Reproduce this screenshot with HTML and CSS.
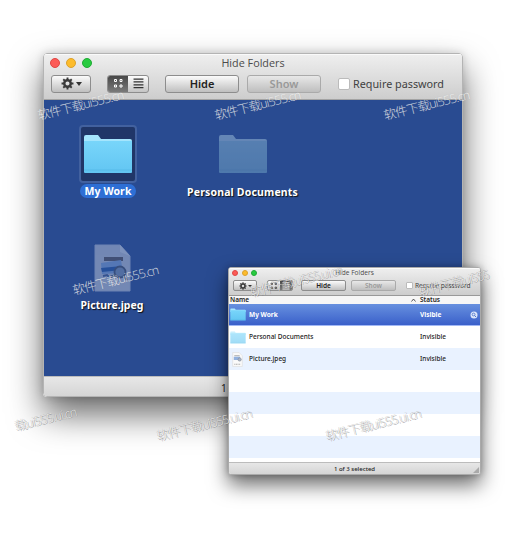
FILE: index.html
```html
<!DOCTYPE html>
<html lang="en"><head><meta charset="utf-8"><title>Hide Folders</title><link rel="stylesheet" href="styles.css"></head>
<body>
<svg class="defs" width="0" height="0" aria-hidden="true">
<defs>
<linearGradient id="sky" x2="0" y2="1"><stop stop-color="#78d5fa"/><stop offset="1" stop-color="#62c5f2"/></linearGradient>
<symbol id="folder" viewBox="0 0 50 40"><path d="M1 5V3q0-2 2-2h12l3 4h29q2 0 2 2v5H1z" fill="#a4e5fd"/><path d="M1 7h48v31q0 1-1 1H2q-1 0-1-1z" fill="url(#sky)"/><path d="M1 36h48" stroke="#54b8e4" stroke-width=".8"/></symbol>
<symbol id="gear" viewBox="0 0 24 24"><circle cx="12" cy="12" r="6" fill="none" stroke="#3a3a3a" stroke-width="4.500"/><path d="M12 1v5M12 18v5M1 12h5M18 12h5M4.200 4.200l4 4M15.800 15.800l4 4M4.200 19.800l4-4M15.800 8.200l4-4" stroke="#3a3a3a" stroke-width="3.500"/></symbol>
<symbol id="grid" viewBox="0 0 11 11"><path d="M1.500 1.500h2v2h-2zM7 1.500h2v2h-2zM1.500 7h2v2h-2zM7 7h2v2h-2z" fill="none" stroke="currentColor"/></symbol>
<symbol id="list" viewBox="0 0 10 10"><path d="M.5 1h9M.5 3.600h9M.5 6.200h9M.5 8.800h9" stroke="currentColor" stroke-width="1.1"/></symbol>
<symbol id="picture" viewBox="0 0 37 48"><path d="M1 1h25l10 11v35H1z" fill="#d9dce4" stroke="#ccd2e3"/><path d="M26 1v7l10 4z" fill="#f4f5f8"/><path d="M10 13h19v4H10z" fill="#62564f"/><path d="M7 19l20-3 2 13-21 1z" fill="#8fb4e8"/><path d="M7 24l21-2v4l-20 2z" fill="#2458a8"/><path d="M9 32l4-1 2 2 4-1" stroke="#445c8e" stroke-width="2" fill="none"/><circle cx="26" cy="28" r="5.500" fill="#8ba0bb" stroke="#4b5464" stroke-width="1.800"/><path d="M21 31l-4 2M30 33l3 3" stroke="#4b5464" stroke-width="2"/></symbol>
</defs></svg>
<main class="desktop">
<section class="window large">
  <header class="chrome">
    <div class="titlebar"><div class="lights"><i></i><i></i><i></i></div><h1>Hide Folders</h1></div>
    <div class="toolbar">
      <div class="button gear"><svg><use href="#gear"/></svg><b class="arrow"></b></div>
      <div class="switch"><span class="active"><svg><use href="#grid"/></svg></span><span><svg><use href="#list"/></svg></span></div>
      <div class="button hide">Hide</div><div class="button show">Show</div>
      <label class="password"><i></i><span>Require password</span></label>
    </div>
  </header>
  <div class="icons">
    <div class="item selected"><div class="picture"><svg><use href="#folder"/></svg></div><span>My Work</span></div>
    <div class="item faded"><div class="picture"><svg><use href="#folder"/></svg></div><span>Personal Documents</span></div>
    <div class="item file"><div class="picture"><svg><use href="#picture"/></svg></div><span>Picture.jpeg</span></div>
  </div>
  <footer>1 of 3 selected</footer>
</section>
<section class="window small">
  <header class="chrome">
    <div class="titlebar"><div class="lights"><i></i><i></i><i></i></div><h1>Hide Folders</h1></div>
    <div class="toolbar">
      <div class="button gear"><svg><use href="#gear"/></svg><b class="arrow"></b></div>
      <div class="switch"><span><svg><use href="#grid"/></svg></span><span class="active"><svg><use href="#list"/></svg></span></div>
      <div class="button hide">Hide</div><div class="button show">Show</div>
      <label class="password"><i></i><span>Require password</span></label>
    </div>
  </header>
  <div class="columns"><span>Name</span><svg viewBox="0 0 5 4"><path d="M.5 3.500L2.500 1l2 2.500" fill="none" stroke="#333" stroke-width=".8"/></svg><span class="status">Status</span></div>
  <div class="rows">
    <div class="row current"><svg class="thumb"><use href="#folder"/></svg><span>My Work</span><span class="state">Visible</span><svg class="reveal" viewBox="0 0 8 8"><circle cx="4" cy="4" r="3.500" fill="#dce6fa"/><circle cx="3.600" cy="3.500" r="1.400" fill="none" stroke="#4971c8" stroke-width=".8"/><path d="M4.600 4.500L6 6" stroke="#4971c8"/></svg></div>
    <div class="row dim"><svg class="thumb"><use href="#folder"/></svg><span>Personal Documents</span><span class="state">Invisible</span></div>
    <div class="row doc"><svg class="thumb" viewBox="0 0 12 14"><path d="M1.500.5h6l3 3v10h-9z" fill="#fafafa" stroke="#ddd" stroke-width=".6"/><path d="M3 3h5v1H3z" fill="#aaa"/><path d="M2.500 4.500h6v3h-6z" fill="#93b2df"/><circle cx="8" cy="7" r="1.500" fill="#aab7c8" stroke="#858d99" stroke-width=".6"/><path d="M3 11.500h6" stroke="#aaa" stroke-dasharray="1 .5"/></svg><span>Picture.jpeg</span><span class="state">Invisible</span></div>
    <div class="row"></div><div class="row"></div><div class="row"></div><div class="row"></div>
  </div>
  <footer>1 of 3 selected<svg class="grip" viewBox="0 0 6 6"><path d="M0 6L6 0v6z" fill="#aaa"/></svg></footer>
</section>
<div class="mark m1">软件下载ui555.cn</div><div class="mark m2">软件下载ui555.cn</div><div class="mark m3">软件下载ui555.cn</div>
<div class="mark m4">软件下载ui555.cn</div>
<div class="mark gray m5">软件下载ui555.ui.cn</div><div class="mark gray m6">软件下载ui555</div>
<div class="mark gray m7">载ui555.ui.cn</div><div class="mark gray m8">软件下载ui555.ui.cn</div><div class="mark gray m9">软件下载ui555.ui.cn</div>
</main>
</body></html>
```
FILE: styles.css
```css
*{box-sizing:border-box}
body{margin:0;background:#fff;font-family:"Noto Sans","Noto Sans CJK SC",sans-serif;color:#222}
svg{display:block}
.defs{position:absolute}
.desktop{position:relative;width:505px;height:538px;overflow:hidden}
.window{position:absolute;display:flex;flex-direction:column;overflow:hidden}
.large{left:43px;top:53px;width:420px;height:344px;border-radius:4px;border:1px solid #b4b4b4;box-shadow:0 17px 34px rgba(0,0,0,.6),0 0 9px rgba(0,0,0,.16)}
.small{left:228px;top:267px;width:253px;height:208px;border-radius:3px;border:1px solid #aaa;background:#fff;box-shadow:0 10px 20px rgba(0,0,0,.58),0 0 6px rgba(0,0,0,.25)}
.chrome{background:linear-gradient(#efefef,#cdcdcd);height:46px;flex:none;border-bottom:1px solid #a3a3a3;box-shadow:inset 0 1px #fafafa}
.titlebar{height:17px;display:grid;grid-template-columns:1fr;align-items:center}
.titlebar>*{grid-area:1/1}
h1{margin:0;text-align:center;font:400 10.8px/17px "Open Sans",sans-serif;color:#4b4b4b}
.lights{display:flex;gap:6.200px;padding-left:6px}
.lights i{width:10px;height:10px;border-radius:50%;background:#fc5b57;border:.5px solid #df4744}
.lights i:nth-child(2){background:#fdbc2c;border-color:#dca12b}
.lights i:nth-child(3){background:#28cb40;border-color:#20ab35}
.toolbar{display:flex;align-items:center;height:25px;padding-left:7px}
.button{height:18px;border:1px solid #8d8d8d;border-radius:3px;background:linear-gradient(#fbfbfb,#bfbfbf);display:flex;align-items:center;justify-content:center;font-size:11px;font-weight:600}
.gear{width:40px;gap:2px}
.gear svg{width:13px;height:13px}
.arrow{border:3px solid transparent;border-top:4px solid #333;border-bottom:0}
.switch{margin-left:16px;width:42px;height:18px;border:1px solid #8d8d8d;border-radius:3px;display:flex;overflow:hidden;color:#333;background:linear-gradient(#fdfdfd,#c4c4c4)}
.switch span{flex:1;display:flex;align-items:center;justify-content:center}
.switch .active{background:linear-gradient(#484848,#7a7a7a);color:#fff}
.switch svg{width:11px;height:11px}
.hide{margin-left:16px;width:74px}
.show{margin-left:8px;width:74px;color:#999;border-color:#aaa;background:linear-gradient(#e8e8e8,#bebebe)}
.password{display:flex;align-items:center;gap:3px;margin-left:17px;font-size:10.800px;color:#414141;white-space:nowrap}
.password i{width:12px;height:12px;border:1px solid #bbb;border-radius:2px;background:#fff}
.icons{height:277px;background:#294b91;display:grid;grid-template-columns:128px 141px;grid-template-rows:117px 117px;padding-top:25px}
.item{display:flex;flex-direction:column;align-items:center;color:#fff;font:700 10.500px/14px "Noto Sans",sans-serif;text-shadow:1px 1px 1px #111;white-space:nowrap}
.picture{width:58px;height:58px;border:2px solid transparent;border-radius:4px;display:grid;place-items:center;margin-bottom:1px}
.picture svg{width:50px;height:40px}
.selected .picture{background:#203668;border-color:#42619f}
.selected span{background:#2e6fd5;border-radius:8px;padding:0 4px;text-shadow:none;letter-spacing:.1px}
.faded .picture{margin-bottom:2px}
.faded .picture svg{opacity:.4;filter:saturate(.55)}
.faded span{letter-spacing:.17px}
.file{padding-left:8px}
.file .picture{height:50px;width:50px;margin-bottom:6px}
.file .picture svg{width:37px;height:48px;opacity:.42}
footer{height:20px;flex:none;background:linear-gradient(#e7e7e7,#d5d5d5);border-top:1px solid #bcbcbc;text-align:center;font-size:10px;line-height:22px;word-spacing:-1.2px}
.small .chrome{height:27.500px;border-bottom:1px solid #999}
.small .titlebar{height:10px}
.small h1{font-size:6.600px;line-height:10px}
.small .lights{gap:3.700px;padding-left:3px}
.small .lights i{width:6px;height:6px}
.small .toolbar{height:15px;padding-left:4px}
.small .button{height:11px;border-radius:2px;font-size:6.500px}
.small .gear{width:24px;gap:1px}
.small .gear svg{width:8px;height:8px}
.small .arrow{border-width:2px;border-bottom:0}
.small .switch{height:11px;width:26px;margin-left:10px;border-radius:2px}
.small .switch svg{width:8px;height:8px}
.small .hide{width:45px;margin-left:8px}
.small .show{width:45px;margin-left:5px}
.small .password{font-size:6.600px;gap:2px;margin-left:10px}
.small .password i{width:7px;height:7px;border-radius:1px}
.columns{height:8px;display:flex;align-items:center;background:#f6f6f6;font-size:6.500px;line-height:8px;font-weight:600;padding-left:1px}
.columns svg{width:5px;height:4px;margin-left:auto}
.columns .status{width:60px;margin-left:4px}
.rows{height:158px;flex:none}
.row{height:22px;display:grid;grid-template-columns:16px 171px 53px 8px;column-gap:0;align-items:center;font-size:6.500px;line-height:8px;font-weight:500;padding-left:1px;padding-top:1px}
.row:nth-child(odd){background:#e9f2ff}
.row.current{background:linear-gradient(#6790df,#3a60ca);color:#fff;font-weight:700;border-bottom:1px solid #a2b8f5}
.thumb{width:16px;height:13px}
.row span{padding-left:3px}
.row .state{padding-left:3px}
.dim .thumb{opacity:.6}
.doc .thumb{width:15px;height:15px}
.reveal{width:8px;height:8px}
.small footer{height:12px;font-size:6px;line-height:12px;margin-top:auto;position:relative;color:#222;font-weight:500;word-spacing:0}
.grip{position:absolute;right:1px;bottom:1px;width:6px;height:6px}
.mark{position:absolute;font:300 12.500px/16px "Open Sans","Noto Sans CJK SC",sans-serif;letter-spacing:-.85px;color:rgba(255,255,255,.72);white-space:nowrap;transform:rotate(-14deg);transform-origin:0 100%;text-shadow:0 0 1px #8885}
.gray{letter-spacing:-1.1px;color:rgba(255,255,255,.72);text-shadow:.5px .5px .5px #6669,-.5px -.5px .5px #7776}
.m1{left:40px;top:108px}.m2{left:217px;top:108px}.m3{left:386px;top:108px}
.m4{left:75px;top:283px}.m5{left:252px;top:285px}.m6{left:421px;top:284px}
.m7{left:17px;top:419px}.m8{left:159px;top:429px}.m9{left:328px;top:429px}
.m7,.m8,.m9{letter-spacing:-.9px}
```
